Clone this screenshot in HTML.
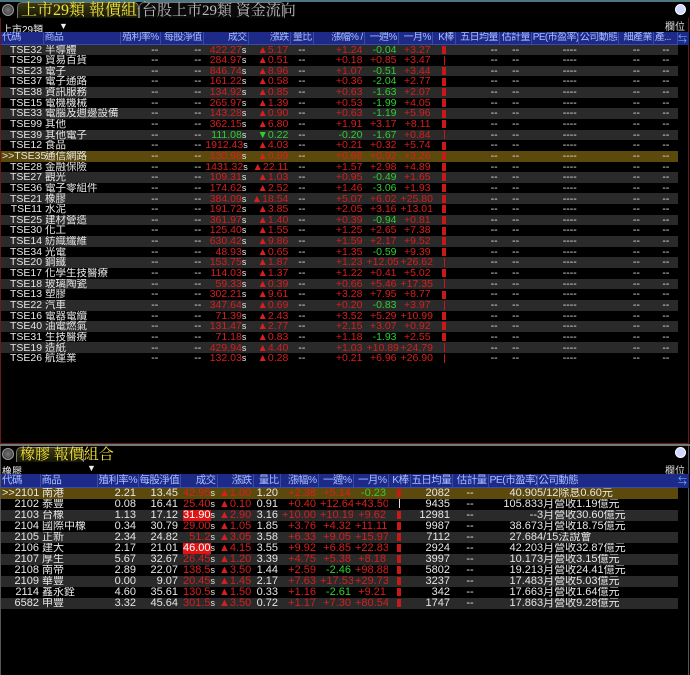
<!DOCTYPE html>
<html><head><meta charset="utf-8"><style>
*{margin:0;padding:0;box-sizing:border-box}
body{width:690px;height:675px;background:#000;overflow:hidden;position:relative;font-family:"Liberation Sans","Noto Sans CJK TC",sans-serif;color:#e6e6e6}
.abs{position:absolute}
table{border-collapse:collapse;table-layout:fixed;position:absolute;left:1px}
td,th{white-space:nowrap;overflow:hidden;padding:0 2px;line-height:1}
td:first-child{overflow:visible;padding:0 1px}
th{background:#1d2a88;color:#a9bdff;font-weight:normal;text-align:right;border-right:1px solid #3a4aa8;border-bottom:1px solid #3a4aa8;letter-spacing:-0.6px;padding:0 1px}
th.l{text-align:left}
.t1 td{height:10.65px;font-size:10.5px}
.t1 th{height:12px;font-size:10px}
.t2 td{height:10.6px;font-size:11px}
.t2 th{height:13px;font-size:10.5px}
tr.g td{background:#2a2a2a}
tr.h td{background:#5c4a0c}
.r{text-align:right}.c{text-align:center}.l{text-align:left}
.R{color:#d81e1e}.G{color:#2ed02e}.W{color:#e6e6e6}
.s{color:#e6e6e6;font-size:9px}
.hl{background:#e01414;color:#fff}
.k{display:inline-block;width:4px;height:8px;background:#c81818;vertical-align:middle}
.kl{display:inline-block;width:1px;height:9px;background:#c81818;vertical-align:middle}
.tab{position:absolute;background:linear-gradient(#3a3a10,#15150a);border:1px solid #777;border-bottom:none;border-radius:5px 5px 0 0;font-family:"Liberation Serif","Noto Serif CJK SC",serif;white-space:nowrap}
.btn{position:absolute;width:12px;height:12px;border-radius:50%;background:radial-gradient(#777,#333);border:1px solid #999}
.mag{position:absolute;width:11px;height:11px;border-radius:50%;background:#cfd8ff;border:1px solid #fff}
</style></head><body>
<div class="abs" style="left:0;top:0;width:690px;height:2px;background:#4a7880"></div>
<div class="abs" style="left:0;top:18px;width:689px;height:426px;border:1px solid #6a1a1a;border-top:none"></div>
<div class="btn" style="left:2px;top:4px"></div>
<div class="tab" style="left:17px;top:2px;width:122px;height:16px;color:#f2e23a;font-size:16px;line-height:16px;padding-left:3px">上市29類 報價組合</div>
<div class="tab" style="left:139px;top:2px;width:146px;height:16px;background:#0a0a0a;color:#bbb;font-size:15px;line-height:16px;padding-left:2px">台股上市29類 資金流向</div>
<div class="mag" style="left:675px;top:4px"></div>
<div class="abs" style="left:665px;top:18px;font-size:10px;color:#ddd">欄位</div>
<div class="abs" style="left:2px;top:21px;font-size:10px;color:#eee">上市29類</div>
<div class="abs" style="left:59px;top:21px;font-size:9px;color:#eee">▼</div>

<table class="t1" style="top:32px;width:677px">
<colgroup><col style="width:42px"><col style="width:77px"><col style="width:40px"><col style="width:43px"><col style="width:45px"><col style="width:42px"><col style="width:23px"><col style="width:51px"><col style="width:34px"><col style="width:34px"><col style="width:23px"><col style="width:44px"><col style="width:32px"><col style="width:47px"><col style="width:40px"><col style="width:35px"><col style="width:24px"></colgroup>
<tr><th class="l">代碼</th><th class="l">商品</th><th>殖利率%</th><th>每股淨值</th><th>成交</th><th>漲跌</th><th>量比</th><th>漲幅% /</th><th>一週%</th><th>一月%</th><th>K棒</th><th>五日均量</th><th>估計量</th><th>PE(市盈率)</th><th class="l">公司動態</th><th>細產業</th><th class="l">產...</th></tr>
</table>
<div class="abs" style="left:678px;top:32px;width:11px;height:13px;background:#1d2a88;color:#6af;font-size:9px">⇆</div>

<table class="t1" id="t1" style="top:44.5px;width:677px">
<colgroup><col style="width:42px"><col style="width:77px"><col style="width:40px"><col style="width:43px"><col style="width:45px"><col style="width:42px"><col style="width:23px"><col style="width:51px"><col style="width:34px"><col style="width:34px"><col style="width:23px"><col style="width:44px"><col style="width:32px"><col style="width:47px"><col style="width:40px"><col style="width:35px"><col style="width:24px"></colgroup>
<tr class="g"><td class="r">TSE32</td><td>半導體</td><td class="r">--</td><td class="r">--</td><td class="r R">422.27<span class="s">s</span></td><td class="r R">▲5.17</td><td class="c">--</td><td class="r R">+1.24</td><td class="r G">-0.04</td><td class="r R">+3.27</td><td class="c"><span class="k"></span></td><td class="r">--</td><td class="c">--</td><td class="r">----</td><td></td><td class="c">--</td><td class="c">--</td></tr>
<tr><td class="r">TSE29</td><td>貿易百貨</td><td class="r">--</td><td class="r">--</td><td class="r R">284.97<span class="s">s</span></td><td class="r R">▲0.51</td><td class="c">--</td><td class="r R">+0.18</td><td class="r R">+0.85</td><td class="r R">+3.47</td><td class="c"><span class="kl"></span></td><td class="r">--</td><td class="c">--</td><td class="r">----</td><td></td><td class="c">--</td><td class="c">--</td></tr>
<tr class="g"><td class="r">TSE23</td><td>電子</td><td class="r">--</td><td class="r">--</td><td class="r R">846.74<span class="s">s</span></td><td class="r R">▲8.96</td><td class="c">--</td><td class="r R">+1.07</td><td class="r G">-0.51</td><td class="r R">+3.44</td><td class="c"><span class="k"></span></td><td class="r">--</td><td class="c">--</td><td class="r">----</td><td></td><td class="c">--</td><td class="c">--</td></tr>
<tr><td class="r">TSE37</td><td>電子通路</td><td class="r">--</td><td class="r">--</td><td class="r R">161.22<span class="s">s</span></td><td class="r R">▲0.58</td><td class="c">--</td><td class="r R">+0.36</td><td class="r G">-2.04</td><td class="r R">+2.77</td><td class="c"><span class="k"></span></td><td class="r">--</td><td class="c">--</td><td class="r">----</td><td></td><td class="c">--</td><td class="c">--</td></tr>
<tr class="g"><td class="r">TSE38</td><td>資訊服務</td><td class="r">--</td><td class="r">--</td><td class="r R">134.92<span class="s">s</span></td><td class="r R">▲0.85</td><td class="c">--</td><td class="r R">+0.63</td><td class="r G">-1.63</td><td class="r R">+2.07</td><td class="c"><span class="k"></span></td><td class="r">--</td><td class="c">--</td><td class="r">----</td><td></td><td class="c">--</td><td class="c">--</td></tr>
<tr><td class="r">TSE15</td><td>電機機械</td><td class="r">--</td><td class="r">--</td><td class="r R">265.97<span class="s">s</span></td><td class="r R">▲1.39</td><td class="c">--</td><td class="r R">+0.53</td><td class="r G">-1.99</td><td class="r R">+4.05</td><td class="c"><span class="k"></span></td><td class="r">--</td><td class="c">--</td><td class="r">----</td><td></td><td class="c">--</td><td class="c">--</td></tr>
<tr class="g"><td class="r">TSE33</td><td>電腦及週邊設備</td><td class="r">--</td><td class="r">--</td><td class="r R">143.28<span class="s">s</span></td><td class="r R">▲0.90</td><td class="c">--</td><td class="r R">+0.63</td><td class="r G">-1.19</td><td class="r R">+5.96</td><td class="c"><span class="k"></span></td><td class="r">--</td><td class="c">--</td><td class="r">----</td><td></td><td class="c">--</td><td class="c">--</td></tr>
<tr><td class="r">TSE99</td><td>其他</td><td class="r">--</td><td class="r">--</td><td class="r R">362.15<span class="s">s</span></td><td class="r R">▲6.80</td><td class="c">--</td><td class="r R">+1.91</td><td class="r R">+3.17</td><td class="r R">+8.11</td><td class="c"><span class="k"></span></td><td class="r">--</td><td class="c">--</td><td class="r">----</td><td></td><td class="c">--</td><td class="c">--</td></tr>
<tr class="g"><td class="r">TSE39</td><td>其他電子</td><td class="r">--</td><td class="r">--</td><td class="r G">111.08<span class="s">s</span></td><td class="r G">▼0.22</td><td class="c">--</td><td class="r G">-0.20</td><td class="r G">-1.67</td><td class="r R">+0.84</td><td class="c"><span class="kl"></span></td><td class="r">--</td><td class="c">--</td><td class="r">----</td><td></td><td class="c">--</td><td class="c">--</td></tr>
<tr><td class="r">TSE12</td><td>食品</td><td class="r">--</td><td class="r">--</td><td class="r R">1912.43<span class="s">s</span></td><td class="r R">▲4.03</td><td class="c">--</td><td class="r R">+0.21</td><td class="r R">+0.32</td><td class="r R">+5.74</td><td class="c"><span class="k"></span></td><td class="r">--</td><td class="c">--</td><td class="r">----</td><td></td><td class="c">--</td><td class="c">--</td></tr>
<tr class="h"><td class="r">&gt;&gt;TSE35</td><td>通信網路</td><td class="r">--</td><td class="r">--</td><td class="r R">130.98<span class="s">s</span></td><td class="r R">▲0.89</td><td class="c">--</td><td class="r R">+0.68</td><td class="r R">+0.92</td><td class="r R">+3.26</td><td class="c"><span class="k"></span></td><td class="r">--</td><td class="c">--</td><td class="r">----</td><td></td><td class="c">--</td><td class="c">--</td></tr>
<tr><td class="r">TSE28</td><td>金融保險</td><td class="r">--</td><td class="r">--</td><td class="r R">1431.32<span class="s">s</span></td><td class="r R">▲22.11</td><td class="c">--</td><td class="r R">+1.57</td><td class="r R">+2.98</td><td class="r R">+4.89</td><td class="c"><span class="k"></span></td><td class="r">--</td><td class="c">--</td><td class="r">----</td><td></td><td class="c">--</td><td class="c">--</td></tr>
<tr class="g"><td class="r">TSE27</td><td>觀光</td><td class="r">--</td><td class="r">--</td><td class="r R">109.31<span class="s">s</span></td><td class="r R">▲1.03</td><td class="c">--</td><td class="r R">+0.95</td><td class="r G">-0.49</td><td class="r R">+1.65</td><td class="c"><span class="k"></span></td><td class="r">--</td><td class="c">--</td><td class="r">----</td><td></td><td class="c">--</td><td class="c">--</td></tr>
<tr><td class="r">TSE36</td><td>電子零組件</td><td class="r">--</td><td class="r">--</td><td class="r R">174.62<span class="s">s</span></td><td class="r R">▲2.52</td><td class="c">--</td><td class="r R">+1.46</td><td class="r G">-3.06</td><td class="r R">+1.93</td><td class="c"><span class="k"></span></td><td class="r">--</td><td class="c">--</td><td class="r">----</td><td></td><td class="c">--</td><td class="c">--</td></tr>
<tr class="g"><td class="r">TSE21</td><td>橡膠</td><td class="r">--</td><td class="r">--</td><td class="r R">384.09<span class="s">s</span></td><td class="r R">▲18.54</td><td class="c">--</td><td class="r R">+5.07</td><td class="r R">+6.02</td><td class="r R">+25.80</td><td class="c"><span class="k"></span></td><td class="r">--</td><td class="c">--</td><td class="r">----</td><td></td><td class="c">--</td><td class="c">--</td></tr>
<tr><td class="r">TSE11</td><td>水泥</td><td class="r">--</td><td class="r">--</td><td class="r R">191.72<span class="s">s</span></td><td class="r R">▲3.85</td><td class="c">--</td><td class="r R">+2.05</td><td class="r R">+3.16</td><td class="r R">+13.01</td><td class="c"><span class="k"></span></td><td class="r">--</td><td class="c">--</td><td class="r">----</td><td></td><td class="c">--</td><td class="c">--</td></tr>
<tr class="g"><td class="r">TSE25</td><td>建材營造</td><td class="r">--</td><td class="r">--</td><td class="r R">361.97<span class="s">s</span></td><td class="r R">▲1.40</td><td class="c">--</td><td class="r R">+0.39</td><td class="r G">-0.94</td><td class="r R">+0.81</td><td class="c"><span class="k"></span></td><td class="r">--</td><td class="c">--</td><td class="r">----</td><td></td><td class="c">--</td><td class="c">--</td></tr>
<tr><td class="r">TSE30</td><td>化工</td><td class="r">--</td><td class="r">--</td><td class="r R">125.40<span class="s">s</span></td><td class="r R">▲1.55</td><td class="c">--</td><td class="r R">+1.25</td><td class="r R">+2.65</td><td class="r R">+7.38</td><td class="c"><span class="k"></span></td><td class="r">--</td><td class="c">--</td><td class="r">----</td><td></td><td class="c">--</td><td class="c">--</td></tr>
<tr class="g"><td class="r">TSE14</td><td>紡織纖維</td><td class="r">--</td><td class="r">--</td><td class="r R">630.42<span class="s">s</span></td><td class="r R">▲9.86</td><td class="c">--</td><td class="r R">+1.59</td><td class="r R">+2.17</td><td class="r R">+9.52</td><td class="c"><span class="k"></span></td><td class="r">--</td><td class="c">--</td><td class="r">----</td><td></td><td class="c">--</td><td class="c">--</td></tr>
<tr><td class="r">TSE34</td><td>光電</td><td class="r">--</td><td class="r">--</td><td class="r R">48.93<span class="s">s</span></td><td class="r R">▲0.65</td><td class="c">--</td><td class="r R">+1.35</td><td class="r G">-0.59</td><td class="r R">+9.39</td><td class="c"><span class="k"></span></td><td class="r">--</td><td class="c">--</td><td class="r">----</td><td></td><td class="c">--</td><td class="c">--</td></tr>
<tr class="g"><td class="r">TSE20</td><td>鋼鐵</td><td class="r">--</td><td class="r">--</td><td class="r R">153.75<span class="s">s</span></td><td class="r R">▲1.87</td><td class="c">--</td><td class="r R">+1.23</td><td class="r R">+12.05</td><td class="r R">+26.62</td><td class="c"><span class="kl"></span></td><td class="r">--</td><td class="c">--</td><td class="r">----</td><td></td><td class="c">--</td><td class="c">--</td></tr>
<tr><td class="r">TSE17</td><td>化學生技醫療</td><td class="r">--</td><td class="r">--</td><td class="r R">114.03<span class="s">s</span></td><td class="r R">▲1.37</td><td class="c">--</td><td class="r R">+1.22</td><td class="r R">+0.41</td><td class="r R">+5.02</td><td class="c"><span class="k"></span></td><td class="r">--</td><td class="c">--</td><td class="r">----</td><td></td><td class="c">--</td><td class="c">--</td></tr>
<tr class="g"><td class="r">TSE18</td><td>玻璃陶瓷</td><td class="r">--</td><td class="r">--</td><td class="r R">59.33<span class="s">s</span></td><td class="r R">▲0.39</td><td class="c">--</td><td class="r R">+0.66</td><td class="r R">+5.46</td><td class="r R">+17.35</td><td class="c"><span class="kl"></span></td><td class="r">--</td><td class="c">--</td><td class="r">----</td><td></td><td class="c">--</td><td class="c">--</td></tr>
<tr><td class="r">TSE13</td><td>塑膠</td><td class="r">--</td><td class="r">--</td><td class="r R">302.21<span class="s">s</span></td><td class="r R">▲9.61</td><td class="c">--</td><td class="r R">+3.28</td><td class="r R">+7.95</td><td class="r R">+8.77</td><td class="c"><span class="k"></span></td><td class="r">--</td><td class="c">--</td><td class="r">----</td><td></td><td class="c">--</td><td class="c">--</td></tr>
<tr class="g"><td class="r">TSE22</td><td>汽車</td><td class="r">--</td><td class="r">--</td><td class="r R">347.64<span class="s">s</span></td><td class="r R">▲0.69</td><td class="c">--</td><td class="r R">+0.20</td><td class="r G">-0.83</td><td class="r R">+3.97</td><td class="c"><span class="kl"></span></td><td class="r">--</td><td class="c">--</td><td class="r">----</td><td></td><td class="c">--</td><td class="c">--</td></tr>
<tr><td class="r">TSE16</td><td>電器電纜</td><td class="r">--</td><td class="r">--</td><td class="r R">71.39<span class="s">s</span></td><td class="r R">▲2.43</td><td class="c">--</td><td class="r R">+3.52</td><td class="r R">+5.29</td><td class="r R">+10.99</td><td class="c"><span class="k"></span></td><td class="r">--</td><td class="c">--</td><td class="r">----</td><td></td><td class="c">--</td><td class="c">--</td></tr>
<tr class="g"><td class="r">TSE40</td><td>油電燃氣</td><td class="r">--</td><td class="r">--</td><td class="r R">131.47<span class="s">s</span></td><td class="r R">▲2.77</td><td class="c">--</td><td class="r R">+2.15</td><td class="r R">+3.07</td><td class="r R">+0.92</td><td class="c"><span class="k"></span></td><td class="r">--</td><td class="c">--</td><td class="r">----</td><td></td><td class="c">--</td><td class="c">--</td></tr>
<tr><td class="r">TSE31</td><td>生技醫療</td><td class="r">--</td><td class="r">--</td><td class="r R">71.18<span class="s">s</span></td><td class="r R">▲0.83</td><td class="c">--</td><td class="r R">+1.18</td><td class="r G">-1.93</td><td class="r R">+2.55</td><td class="c"><span class="k"></span></td><td class="r">--</td><td class="c">--</td><td class="r">----</td><td></td><td class="c">--</td><td class="c">--</td></tr>
<tr class="g"><td class="r">TSE19</td><td>造紙</td><td class="r">--</td><td class="r">--</td><td class="r R">429.94<span class="s">s</span></td><td class="r R">▲4.40</td><td class="c">--</td><td class="r R">+1.03</td><td class="r R">+10.89</td><td class="r R">+24.79</td><td class="c"><span class="kl"></span></td><td class="r">--</td><td class="c">--</td><td class="r">----</td><td></td><td class="c">--</td><td class="c">--</td></tr>
<tr><td class="r">TSE26</td><td>航運業</td><td class="r">--</td><td class="r">--</td><td class="r R">132.03<span class="s">s</span></td><td class="r R">▲0.28</td><td class="c">--</td><td class="r R">+0.21</td><td class="r R">+6.96</td><td class="r R">+26.90</td><td class="c"><span class="kl"></span></td><td class="r">--</td><td class="c">--</td><td class="r">----</td><td></td><td class="c">--</td><td class="c">--</td></tr>
</table>

<div class="abs" style="left:0;top:444px;width:690px;height:2px;background:#777"></div>
<div class="abs" style="left:0;top:446px;width:689px;height:229px;border-left:1px solid #555;border-right:1px solid #555"></div>
<div class="btn" style="left:2px;top:448px"></div>
<div class="tab" style="left:16px;top:447px;width:68px;height:15px;color:#f2e23a;font-size:15px;line-height:15px;padding-left:3px">橡膠 報價組合</div>
<div class="mag" style="left:675px;top:447px"></div>
<div class="abs" style="left:665px;top:462px;font-size:10px;color:#ddd">欄位</div>
<div class="abs" style="left:2px;top:463px;font-size:10px;color:#eee">橡膠</div>
<div class="abs" style="left:87px;top:463px;font-size:9px;color:#eee">▼</div>

<table class="t2" style="top:474px;width:677px">
<colgroup><col style="width:39px"><col style="width:57px"><col style="width:41px"><col style="width:42px"><col style="width:37px"><col style="width:36px"><col style="width:27px"><col style="width:38px"><col style="width:35px"><col style="width:35px"><col style="width:22px"><col style="width:42px"><col style="width:36px"><col style="width:49px"><col style="width:141px"></colgroup>
<tr><th class="l">代碼</th><th class="l">商品</th><th>殖利率%</th><th>每股淨值</th><th>成交</th><th>漲跌</th><th>量比</th><th>漲幅%</th><th>一週%</th><th>一月%</th><th>K棒</th><th>五日均量</th><th>估計量</th><th>PE(市盈率)</th><th class="l">公司動態</th></tr>
</table>
<div class="abs" style="left:678px;top:474px;width:11px;height:14px;background:#1d2a88;color:#6af;font-size:9px">⇆</div>

<table class="t2" style="top:487.5px;width:677px">
<colgroup><col style="width:39px"><col style="width:57px"><col style="width:41px"><col style="width:42px"><col style="width:37px"><col style="width:36px"><col style="width:27px"><col style="width:38px"><col style="width:35px"><col style="width:35px"><col style="width:22px"><col style="width:42px"><col style="width:36px"><col style="width:49px"><col style="width:141px"></colgroup>
<tr class="h"><td class="r">&gt;&gt;2101</td><td>南港</td><td class="r">2.21</td><td class="r">13.45</td><td class="r R">42.95<span class="s">s</span></td><td class="r R">▲1.00</td><td class="r">1.20</td><td class="r R">+2.38</td><td class="r R">+5.14</td><td class="r G">-0.23</td><td class="c"><span class="k"></span></td><td class="r">2082</td><td class="c">--</td><td class="r" style="padding-right:0">40.90</td><td style="padding-left:0">5/12除息0.60元</td></tr>
<tr><td class="r">2102</td><td>泰豐</td><td class="r">0.08</td><td class="r">16.41</td><td class="r R">25.40<span class="s">s</span></td><td class="r R">▲0.10</td><td class="r">0.91</td><td class="r R">+0.40</td><td class="r R">+12.64</td><td class="r R">+43.50</td><td class="c"><span class="kl" style="background:#ddd"></span></td><td class="r">9435</td><td class="c">--</td><td class="r" style="padding-right:0">105.83</td><td style="padding-left:0">3月營收1.19億元</td></tr>
<tr class="g"><td class="r">2103</td><td>台橡</td><td class="r">1.13</td><td class="r">17.12</td><td class="r"><span class="hl">31.90</span><span class="s">s</span></td><td class="r R">▲2.90</td><td class="r">3.16</td><td class="r R">+10.00</td><td class="r R">+10.19</td><td class="r R">+9.62</td><td class="c"><span class="k"></span></td><td class="r">12981</td><td class="c">--</td><td class="r" style="padding-right:0">--</td><td style="padding-left:0">3月營收30.60億元</td></tr>
<tr><td class="r">2104</td><td>國際中橡</td><td class="r">0.34</td><td class="r">30.79</td><td class="r R">29.00<span class="s">s</span></td><td class="r R">▲1.05</td><td class="r">1.85</td><td class="r R">+3.76</td><td class="r R">+4.32</td><td class="r R">+11.11</td><td class="c"><span class="k"></span></td><td class="r">9987</td><td class="c">--</td><td class="r" style="padding-right:0">38.67</td><td style="padding-left:0">3月營收18.75億元</td></tr>
<tr class="g"><td class="r">2105</td><td>正新</td><td class="r">2.34</td><td class="r">24.82</td><td class="r R">51.2<span class="s">s</span></td><td class="r R">▲3.05</td><td class="r">3.58</td><td class="r R">+6.33</td><td class="r R">+9.05</td><td class="r R">+15.97</td><td class="c"><span class="k"></span></td><td class="r">7112</td><td class="c">--</td><td class="r" style="padding-right:0">27.68</td><td style="padding-left:0">4/15法說會</td></tr>
<tr><td class="r">2106</td><td>建大</td><td class="r">2.17</td><td class="r">21.01</td><td class="r"><span class="hl">46.00</span><span class="s">s</span></td><td class="r R">▲4.15</td><td class="r">3.55</td><td class="r R">+9.92</td><td class="r R">+6.85</td><td class="r R">+22.83</td><td class="c"><span class="k"></span></td><td class="r">2924</td><td class="c">--</td><td class="r" style="padding-right:0">42.20</td><td style="padding-left:0">3月營收32.87億元</td></tr>
<tr class="g"><td class="r">2107</td><td>厚生</td><td class="r">5.67</td><td class="r">32.67</td><td class="r R">26.45<span class="s">s</span></td><td class="r R">▲1.20</td><td class="r">3.39</td><td class="r R">+4.75</td><td class="r R">+5.38</td><td class="r R">+8.18</td><td class="c"><span class="k"></span></td><td class="r">3997</td><td class="c">--</td><td class="r" style="padding-right:0">10.17</td><td style="padding-left:0">3月營收3.15億元</td></tr>
<tr><td class="r">2108</td><td>南帝</td><td class="r">2.89</td><td class="r">22.07</td><td class="r R">138.5<span class="s">s</span></td><td class="r R">▲3.50</td><td class="r">1.44</td><td class="r R">+2.59</td><td class="r G">-2.46</td><td class="r R">+98.88</td><td class="c"><span class="k"></span></td><td class="r">5802</td><td class="c">--</td><td class="r" style="padding-right:0">19.21</td><td style="padding-left:0">3月營收24.41億元</td></tr>
<tr class="g"><td class="r">2109</td><td>華豐</td><td class="r">0.00</td><td class="r">9.07</td><td class="r R">20.45<span class="s">s</span></td><td class="r R">▲1.45</td><td class="r">2.17</td><td class="r R">+7.63</td><td class="r R">+17.53</td><td class="r R">+29.73</td><td class="c"><span class="k"></span></td><td class="r">3237</td><td class="c">--</td><td class="r" style="padding-right:0">17.48</td><td style="padding-left:0">3月營收5.03億元</td></tr>
<tr><td class="r">2114</td><td>鑫永銓</td><td class="r">4.60</td><td class="r">35.61</td><td class="r R">130.5<span class="s">s</span></td><td class="r R">▲1.50</td><td class="r">0.33</td><td class="r R">+1.16</td><td class="r G">-2.61</td><td class="r R">+9.21</td><td class="c"><span class="k"></span></td><td class="r">342</td><td class="c">--</td><td class="r" style="padding-right:0">17.66</td><td style="padding-left:0">3月營收1.64億元</td></tr>
<tr class="g"><td class="r">6582</td><td>申豐</td><td class="r">3.32</td><td class="r">45.64</td><td class="r R">301.5<span class="s">s</span></td><td class="r R">▲3.50</td><td class="r">0.72</td><td class="r R">+1.17</td><td class="r R">+7.30</td><td class="r R">+80.54</td><td class="c"><span class="k"></span></td><td class="r">1747</td><td class="c">--</td><td class="r" style="padding-right:0">17.86</td><td style="padding-left:0">3月營收9.28億元</td></tr>
</table>
</body></html>
